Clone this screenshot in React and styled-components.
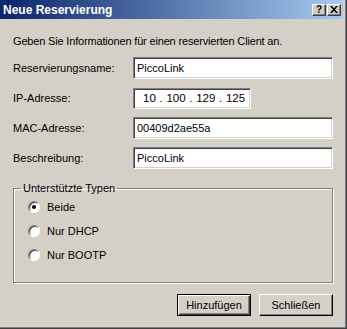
import styled, { createGlobalStyle } from "styled-components";

const Global = createGlobalStyle`
  html, body {
    margin: 0;
    padding: 0;
    background: #d4d0c8;
  }
  * {
    box-sizing: border-box;
  }
`;

const fields = [
  { label: "Reservierungsname:", value: "PiccoLink" },
  { label: "IP-Adresse:", value: "10 . 100 . 129 . 125", ip: true },
  { label: "MAC-Adresse:", value: "00409d2ae55a" },
  { label: "Beschreibung:", value: "PiccoLink" },
];

const types = [
  { label: "Beide", checked: true },
  { label: "Nur DHCP" },
  { label: "Nur BOOTP" },
];

const App = () => {
  return (
    <>
      <Global />
      <Window>
        <TitleBar>
          <Title>Neue Reservierung</Title>
          <CaptionButtons>
            <CaptionButton>?</CaptionButton>
            <CaptionButton>
              <svg width="8" height="7" viewBox="0 0 8 7">
                <path d="M0 0h2l2 2.2L6 0h2L5 3.5 8 7H6L4 4.8 2 7H0l3-3.5z" fill="#000" />
              </svg>
            </CaptionButton>
          </CaptionButtons>
        </TitleBar>
        <Body>
          <Intro>Geben Sie Informationen für einen reservierten Client an.</Intro>
          <Form>
            {fields.map((f) => (
              <Row key={f.label}>
                <Label>{f.label}</Label>
                <Field $ip={f.ip}>{f.value}</Field>
              </Row>
            ))}
          </Form>
          <Group>
            <Legend>Unterstützte Typen</Legend>
            {types.map((t) => (
              <Option key={t.label}>
                <Radio>{t.checked && <Dot />}</Radio>
                {t.label}
              </Option>
            ))}
          </Group>
          <Buttons>
            <Button $default>Hinzufügen</Button>
            <Button>Schließen</Button>
          </Buttons>
        </Body>
      </Window>
    </>
  );
};

export default App;

const Window = styled.div`
  width: 347px;
  height: 329px;
  background: #d4d0c8;
  display: flex;
  flex-direction: column;
  border-right: 1px solid #404040;
  border-bottom: 1px solid #404040;
  box-shadow: inset -1px -1px 0 #808080, inset -2px -2px 0 #d4d0c8;
  padding-right: 3px;
  font-family: "Liberation Sans", Arial, sans-serif;
  font-size: 11px;
  color: #000;
`;

const TitleBar = styled.div`
  height: 19px;
  display: flex;
  align-items: center;
  justify-content: space-between;
  padding: 0 2px 0 3px;
  background: linear-gradient(to right, #0a246a, #a6caf0);
`;

const Title = styled.span`
  color: #fff;
  font-weight: bold;
  font-size: 12px;
`;

const CaptionButtons = styled.div`
  display: flex;
  gap: 1px;
`;

const CaptionButton = styled.div`
  width: 14px;
  height: 12px;
  display: flex;
  align-items: center;
  justify-content: center;
  background: #d4d0c8;
  font-weight: bold;
  font-size: 10px;
  border-top: 1px solid #fff;
  border-left: 1px solid #fff;
  border-right: 1px solid #404040;
  border-bottom: 1px solid #404040;
  box-shadow: inset -1px -1px 0 #808080;
`;

const Body = styled.div`
  display: flex;
  flex-direction: column;
  padding: 0 10px 0 13px;
`;

const Intro = styled.div`
  margin-top: 15px;
  line-height: 14px;
  letter-spacing: -0.17px;
`;

const Form = styled.div`
  display: flex;
  flex-direction: column;
  gap: 8px;
  margin-top: 9px;
`;

const Row = styled.div`
  display: flex;
  align-items: center;
  height: 22px;
`;

const Label = styled.div`
  width: 120px;
`;

const Field = styled.div`
  width: ${(p) => (p.$ip ? "118px" : "200px")};
  height: ${(p) => (p.$ip ? "21px" : "22px")};
  display: flex;
  align-items: center;
  padding-left: ${(p) => (p.$ip ? "9px" : "3px")};
  background: #fff;
  font-size: ${(p) => (p.$ip ? "11.5px" : "11px")};
  word-spacing: ${(p) => (p.$ip ? "0.5px" : "0")};
  border-top: 1px solid #808080;
  border-left: 1px solid #808080;
  border-right: 1px solid #fff;
  border-bottom: 1px solid #fff;
  box-shadow: inset 1px 1px 0 #404040, inset -1px -1px 0 #d4d0c8;
`;

const Group = styled.fieldset`
  margin: 13px 0 0;
  height: 101px;
  padding: 6px 0 0 14px;
  display: flex;
  flex-direction: column;
  gap: 10px;
  border: 1px solid #808080;
  box-shadow: inset 1px 1px 0 #fff, 1px 1px 0 #fff;
`;

const Legend = styled.legend`
  margin-left: -7px;
  padding: 0 2px;
  font-size: 11px;
`;

const Option = styled.div`
  display: flex;
  align-items: center;
  gap: 7px;
  height: 14px;
`;

const Radio = styled.div`
  width: 12px;
  height: 12px;
  border-radius: 50%;
  background: #fff;
  display: flex;
  align-items: center;
  justify-content: center;
  border: 1px solid;
  border-color: #808080 #fff #fff #808080;
  box-shadow: inset 1px 1px 0 #404040;
`;

const Dot = styled.div`
  width: 4px;
  height: 4px;
  border-radius: 50%;
  background: #000;
`;

const Buttons = styled.div`
  display: flex;
  justify-content: flex-end;
  gap: 8px;
  margin-top: 11px;
`;

const Button = styled.div`
  width: 74px;
  height: 22px;
  display: flex;
  align-items: center;
  justify-content: center;
  background: #d4d0c8;
  border: 1px solid ${(p) => (p.$default ? "#000" : "#fff")};
  border-right-color: #000;
  border-bottom-color: #000;
  box-shadow: ${(p) =>
    p.$default
      ? "inset 1px 1px 0 #fff, inset -1px -1px 0 #404040, inset -2px -2px 0 #808080"
      : "inset -1px -1px 0 #808080"};
`;
